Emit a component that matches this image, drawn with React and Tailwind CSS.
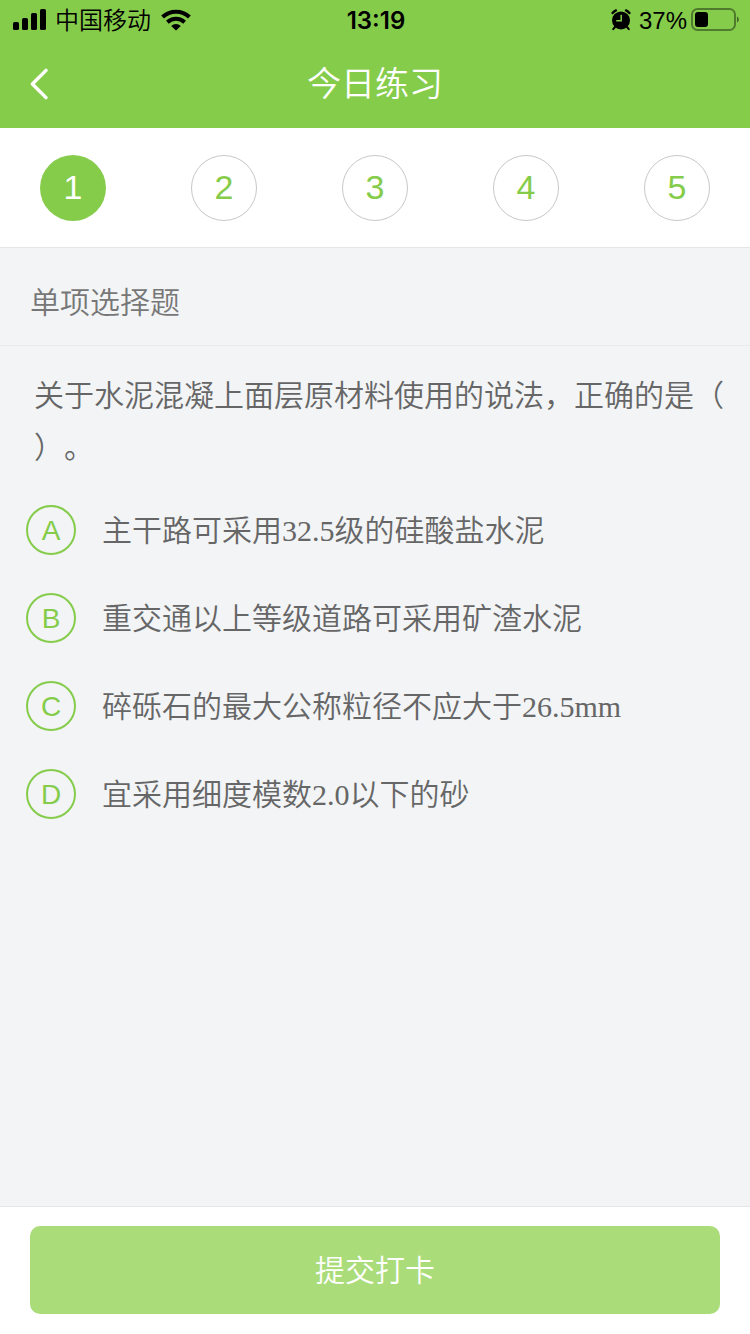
import { useState } from 'react';

const questions = [1, 2, 3, 4, 5];

const options = [
  { key: 'A', text: '主干路可采用32.5级的硅酸盐水泥' },
  { key: 'B', text: '重交通以上等级道路可采用矿渣水泥' },
  { key: 'C', text: '碎砾石的最大公称粒径不应大于26.5mm' },
  { key: 'D', text: '宜采用细度模数2.0以下的砂' },
];

function SignalIcon() {
  return (
    <svg viewBox="0 0 34 22" className="h-[22px] w-[34px]" fill="currentColor" aria-hidden="true">
      <rect x="0" y="13" width="6" height="8" rx="1.6" />
      <rect x="9" y="9" width="6" height="12" rx="1.6" />
      <rect x="18" y="4" width="6" height="17" rx="1.6" />
      <rect x="27" y="0" width="6" height="21" rx="1.6" />
    </svg>
  );
}

function WifiIcon() {
  return (
    <svg viewBox="0 0 30 22" className="h-[22px] w-[30px]" aria-hidden="true">
      <g fill="none" stroke="currentColor" strokeWidth="4">
        <path d="M1.6 8a19.4 19.4 0 0 1 26.8 0" />
        <path d="M6.4 13.2a12.4 12.4 0 0 1 17.2 0" />
      </g>
      <path d="M15 21.6l-4.8-4.6a6.8 6.8 0 0 1 9.6 0z" fill="currentColor" />
    </svg>
  );
}

function AlarmIcon() {
  return (
    <svg viewBox="0 0 20 22" className="h-[22px] w-5" aria-hidden="true">
      <circle cx="10" cy="11.4" r="9" fill="currentColor" />
      <g fill="none" stroke="currentColor" strokeLinecap="round">
        <path d="M1.6 4a9 9 0 0 1 3.4-2.6" strokeWidth="2.4" />
        <path d="M18.4 4a9 9 0 0 0-3.4-2.6" strokeWidth="2.4" />
        <path d="M4 18l-1.8 2.2M16 18l1.8 2.2" strokeWidth="2" />
      </g>
      <path d="M10.2 5.8v6H5.2" fill="none" stroke="#86cc4b" strokeWidth="1.5" />
    </svg>
  );
}

function BatteryIcon() {
  return (
    <svg viewBox="0 0 48 24" className="h-6 w-12" aria-hidden="true">
      <rect x="1" y="1" width="43" height="21" rx="5.5" fill="none" stroke="#000" strokeOpacity="0.4" strokeWidth="2" />
      <rect x="4" y="4" width="13" height="15" rx="3" fill="#000" />
      <path d="M46 8.4c2.4 1 2.4 5.2 0 6.2z" fill="#000" fillOpacity="0.5" />
    </svg>
  );
}

function BackIcon() {
  return (
    <svg viewBox="0 0 18 32" className="h-8 w-[18px]" fill="none" stroke="currentColor" strokeWidth="3.4" strokeLinecap="round" strokeLinejoin="round" aria-hidden="true">
      <path d="M16 2.4L2.4 16 16 29.6" />
    </svg>
  );
}

export default function App() {
  const [current, setCurrent] = useState(1);
  const [answer, setAnswer] = useState('');

  return (
    <div className="flex min-h-screen flex-col bg-[#f2f4f6] font-['Liberation_Sans','Noto_Sans_CJK_SC',sans-serif] text-[#666666]">
      <header className="bg-[#86cc4b]">
        {/* Status bar */}
        <div className="grid h-10 grid-cols-3 items-center pl-[13px] pr-[11px] text-[24px] leading-8 text-black">
          <div className="flex items-center gap-2">
            <SignalIcon />
            <span className="pt-0.5 font-[350]">中国移动</span>
            <span className="ml-0.5"><WifiIcon /></span>
          </div>
          <span className="pt-0.5 text-center font-['Inter',sans-serif] font-semibold">13:19</span>
          <div className="flex items-center justify-end gap-1">
            <AlarmIcon />
            <span className="ml-1 pt-0.5">37%</span>
            <BatteryIcon />
          </div>
        </div>

        <div className="grid h-[88px] grid-cols-[1fr_auto_1fr] items-center px-[30px] text-white">
          <button type="button" aria-label="返回" className="justify-self-start">
            <BackIcon />
          </button>
          <h1 className="text-[34px] font-[350]">今日练习</h1>
        </div>
      </header>

      <nav className="flex h-[120px] items-center justify-between border-b border-[#e6e6e6] bg-white px-10">
        {questions.map((n) => (
          <button
            key={n}
            type="button"
            onClick={() => setCurrent(n)}
            className={`h-[66px] w-[66px] rounded-full text-[34px] ${
              n === current ? 'bg-[#86cc4b] text-white' : 'border border-[#c8c8c8] bg-white text-[#86cc4b]'
            }`}
          >
            {n}
          </button>
        ))}
      </nav>

      <main className="flex-1">
        <h2 className="border-b border-[#e8eaec] px-[30px] pb-5 pt-8 text-[30px] font-[350] leading-[45px] text-[#777777]">
          单项选择题
        </h2>

        <fieldset className="pt-6" aria-labelledby="question">
          <p id="question" className="whitespace-nowrap px-[34px] text-[30px] font-[350] leading-[52px] [text-spacing-trim:space-all]">
            关于水泥混凝上面层原材料使用的说法，正确的是（
            <br />
            ）。
          </p>

          <div className="pt-3">
            {options.map((o) => (
              <label key={o.key} className="relative flex h-[88px] cursor-pointer items-center gap-[26px] px-[26px]">
                <input
                  type="radio"
                  name="answer"
                  value={o.key}
                  checked={answer === o.key}
                  onChange={() => setAnswer(o.key)}
                  className="peer sr-only"
                />
                <span className="grid h-[50px] w-[50px] shrink-0 place-items-center rounded-full border-2 border-[#86cc4b] pt-0.5 text-[28px] leading-none text-[#86cc4b] peer-checked:bg-[#86cc4b] peer-checked:text-white">
                  {o.key}
                </span>
                <span className="font-['Liberation_Serif','Noto_Sans_CJK_SC',serif] text-[30px] font-[350]">{o.text}</span>
              </label>
            ))}
          </div>
        </fieldset>
      </main>

      <footer className="border-t border-[#e6e6e6] bg-white px-[30px] pb-5 pt-[19px]">
        <button type="button" className="h-[88px] w-full rounded-[10px] bg-[#aadc7a] text-[30px] font-[350] text-white">
          提交打卡
        </button>
      </footer>
    </div>
  );
}
